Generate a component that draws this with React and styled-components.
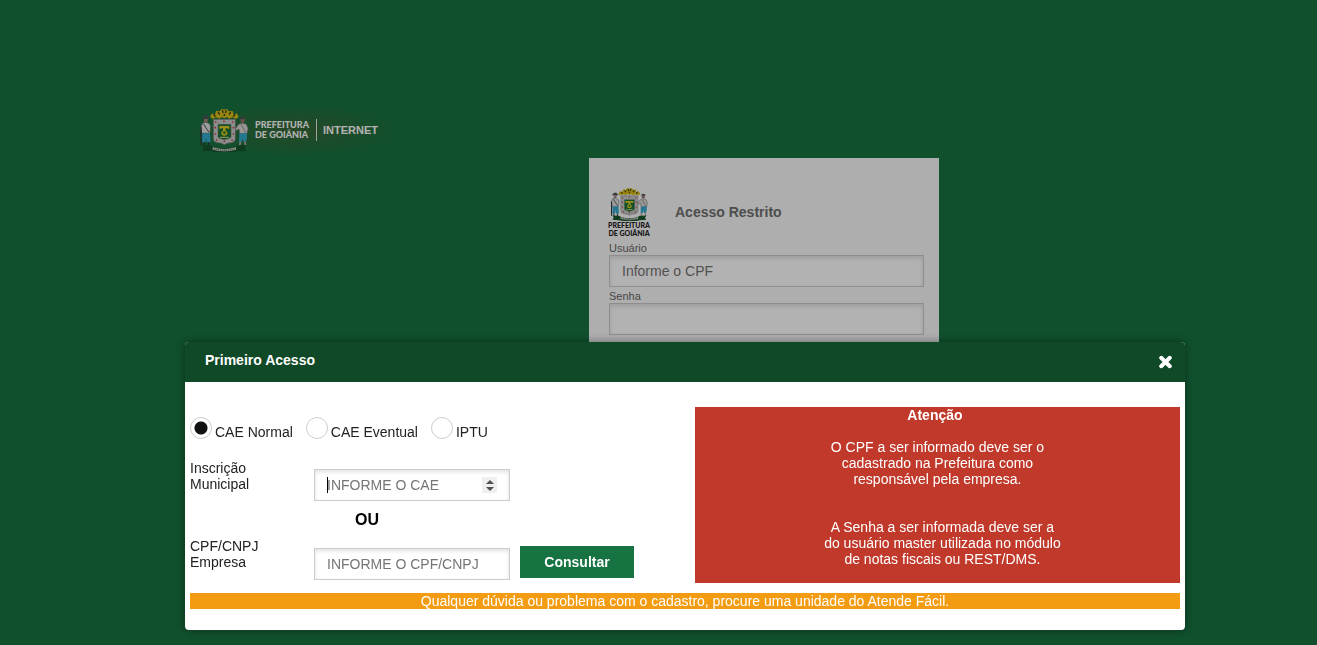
import React from "react";
import styled, { createGlobalStyle } from "styled-components";

const GlobalStyle = createGlobalStyle`
  *, *::before, *::after { box-sizing: border-box; }
  body {
    margin: 0;
    background: #177341;
    font-family: "Liberation Sans", Arial, sans-serif;
    font-size: 14px;
    line-height: 16px;
    color: #222;
  }
  p, h1, h2, fieldset { margin: 0; padding: 0; border: 0; }
  input, button { font: inherit; }
`;

const Page = styled.div`
  width: 100%;
  max-width: 947px;
  min-height: 100vh;
  margin: 0 auto;
  padding-top: 103px;
`;

const Brand = styled.header`
  display: flex;
  align-items: center;
  width: 220px;
  height: 55px;
  padding: 0 0 2px 14px;
  color: #fff;
  background: radial-gradient(closest-side, rgba(130, 80, 40, 0.3), transparent);
`;

const BrandName = styled.span`
  margin-left: 5px;
  padding: 1px 7px 1px 0;
  border-right: 1px solid #e4e4dc;
  font-family: Lato, sans-serif;
  font-weight: 900;
  font-size: 9px;
  line-height: 10px;
  white-space: nowrap;
`;

const BrandArea = styled.span`
  margin-left: 6px;
  font-weight: 700;
  font-size: 11px;
`;

const LoginColumn = styled.main`
  display: flex;
  justify-content: flex-end;
  padding-right: 193px;
`;

const LoginCard = styled.form`
  width: 350px;
  padding: 28px 15px 40px 20px;
  background: #f9f9f9;
  color: #666;
`;

const LoginHead = styled.div`
  display: flex;
  align-items: center;
  gap: 26px;
  height: 52px;
  margin-bottom: 4px;
`;

const Emblem = styled.div`
  display: flex;
  flex-direction: column;
  align-items: center;
  width: 40px;
  font-family: Lato, sans-serif;
  font-weight: 900;
  font-size: 7px;
  line-height: 8px;
  color: #222;
  white-space: nowrap;
  text-align: center;
`;

const LoginTitle = styled.h1`
  font-size: 14px;
  line-height: 16px;
  color: #707070;
`;

const LoginLabel = styled.label`
  display: block;
  height: 13px;
  font-size: 11px;
  line-height: 13px;
`;

const TextInput = styled.input`
  display: block;
  width: ${({ $width }) => $width || "100%"};
  height: 32px;
  padding: 0 12px;
  border: 1px solid #ccc;
  border-radius: 0;
  outline: none;
  background-color: #fff;
  box-shadow: inset 0 2px 4px rgba(0, 0, 0, 0.12);
  color: #333;
  &::placeholder { color: #757575; opacity: 1; }
`;

const LoginInput = styled(TextInput)`
  margin-bottom: 3px;
`;

const spinnerArrows =
  "url(\"data:image/svg+xml,%3Csvg xmlns='http://www.w3.org/2000/svg' width='15' height='16'%3E%3Cpath d='M4 7h8L8 3zM4 10h8l-4 4z' fill='%23505050'/%3E%3C/svg%3E\")";

const NumberInput = styled(TextInput)`
  background-image: linear-gradient(#000, #000);
  background-repeat: no-repeat;
  background-size: 1px 16px;
  background-position: 12px 7px;
  &::-webkit-inner-spin-button {
    appearance: none;
    width: 15px;
    height: 16px;
    opacity: 1;
    background: #efefef ${spinnerArrows} no-repeat center;
  }
`;

const Backdrop = styled.div`
  position: fixed;
  inset: 0;
  display: flex;
  justify-content: center;
  align-items: flex-end;
  padding: 0 0 15px 53px;
  background: rgba(0, 0, 0, 0.3);
`;

const Dialog = styled.section`
  width: 100%;
  max-width: 1000px;
  border-radius: 4px;
  background: #fff;
  box-shadow: 0 0 10px rgba(0, 0, 0, 0.4);
`;

const DialogHeader = styled.div`
  display: flex;
  align-items: center;
  justify-content: space-between;
  height: 40px;
  padding: 0 12px 4px 20px;
  border-radius: 4px 4px 0 0;
  background: #104928;
  color: #fff;
`;

const DialogTitle = styled.h2`
  font-size: 14px;
  line-height: 16px;
`;

const CloseButton = styled.button`
  display: flex;
  margin-top: 4px;
  padding: 0;
  border: 0;
  background: none;
  color: #fff;
  cursor: pointer;
`;

const DialogBody = styled.div`
  padding: 25px 5px 21px;
`;

const Columns = styled.div`
  display: flex;
  justify-content: space-between;
  gap: 20px;
`;

const Query = styled.form`
  flex: 1;
  padding-top: 10px;
`;

const RadioGroup = styled.fieldset`
  display: flex;
  gap: 13px;
  height: 23px;
  margin-bottom: 20px;
`;

const RadioLabel = styled.label`
  display: flex;
  align-items: flex-end;
  gap: 3px;
  white-space: nowrap;
`;

const Radio = styled.input`
  appearance: none;
  align-self: flex-start;
  width: 22px;
  height: 22px;
  margin: 0;
  border: 1px solid #ccc;
  border-radius: 50%;
  background: #fff;
  &:checked {
    background: radial-gradient(circle, #111 0 6px, #fff 7px);
  }
`;

const FieldRow = styled.div`
  display: flex;
  align-items: flex-start;
`;

const FieldLabel = styled.label`
  width: 124px;
`;

const FieldControl = styled.div`
  padding-top: ${({ $top }) => $top};
`;

const Or = styled.p`
  width: 196px;
  margin: 11px 0 10px 165px;
  font-weight: 700;
  font-size: 16px;
  color: #000;
`;

const SubmitButton = styled.button`
  width: 114px;
  height: 32px;
  margin: 8px 0 0 10px;
  padding: 0;
  border: 0;
  background: #177341;
  color: #fff;
  font-weight: 700;
  cursor: pointer;
`;

const Warning = styled.aside`
  width: 49%;
  padding-bottom: 16px;
  background: #c0392b;
  color: #fff;
  text-align: center;
`;

const WarningTitle = styled.h2`
  padding-right: 5px;
  margin-bottom: 16px;
  font-size: 14px;
  line-height: 16px;
`;

const WarningText = styled.p`
  & + & {
    margin-top: 32px;
    padding-left: 10px;
  }
`;

const HelpBar = styled.p`
  margin-top: 10px;
  background: #f39c12;
  color: #fff;
  text-align: center;
`;

function Crest({ width, height }) {
  const dots = [[55, 48], [80, 46], [106, 48], [54, 65], [108, 65], [54, 84], [108, 84], [58, 102], [81, 106], [104, 102]];
  return (
    <svg width={width} height={height} viewBox="5 6 153 132" aria-hidden="true">
      <path d="M38 32l6-10 9 4 3-11 11 1 6-7 8 2 8-2 6 7 11-1 3 11 9-4 6 10-8 7-10-5-10 4-8-5-7 4-7-4-8 5-10-4-10 5z" fill="#d9bf18" />
      <path d="M49 24l5 8M62 18l5 8M75 13l3 8M87 13l-3 8M100 18l-5 8M113 24l-5 8M81 24v6" stroke="#3a3a12" strokeWidth="4" />
      <path d="M48 40h66v59q0 9-12 11-14 0-21 6-7-6-21-6-12-2-12-11z" fill="#c9cdca" stroke="#777" strokeWidth="2" />
      <path d="M62 55h39v39q-8 6-20 7-11-1-19-7z" fill="#187138" stroke="#687e6c" strokeWidth="2" />
      <path d="M66 60h30v8h-5l-3-2h-3v8q9 5 3 12-7 6-14 0-6-7 3-12v-8h-3l-3 2h-5z" fill="#e4cf22" />
      <circle cx="81" cy="80" r="4" fill="#187138" />
      <path d="M68 94h26" stroke="#e7dc85" strokeWidth="3" />
      {dots.map(([x, y]) => <circle key={`${x}-${y}`} cx={x} cy={y} r="2.6" fill="#cc343d" />)}
      <path d="M12 36l6-3 2-5h11l2 5 6 3-6 3H18z" fill="#4d5658" />
      <path d="M20 39h11v7l-5 5-6-4z" fill="#a98778" />
      <path d="M16 51l10-2 9 3 5 8-2 22H14l-4-18z" fill="#dededb" stroke="#626b6c" strokeWidth="2" />
      <path d="M18 53l17 26" stroke="#4d575c" strokeWidth="3" />
      <path d="M15 82h23l2 27H28l-2-14-1 14H14z" fill="#35a9ce" />
      <path d="M11 62v56M20 109v10M34 109v10" stroke="#30383b" strokeWidth="4" />
      <path d="M127 40q0-8 9-8t9 8z" fill="#4d5658" />
      <path d="M129 40h13v6l-6 6-6-5z" fill="#9a7568" />
      <path d="M124 55l10-4 13 4 5 12-3 16h-22l-2-14-9 5-2-5z" fill="#d8d7d2" stroke="#777" strokeWidth="2" />
      <path d="M131 54l15 27" stroke="#667174" strokeWidth="2" />
      <path d="M126 82h23v14l-3 11h-8l-2-10-3 12h-8z" fill="#35a9ce" />
      <path d="M129 108l-2 11M143 107l2 12" stroke="#c4aaa0" strokeWidth="5" />
      <path d="M14 117l26 1 10 6q31 8 62 0l10-6 26-1-6 9 6 8-27 2q-40 8-80 0l-27-2 6-8z" fill="#16552d" />
      <path d="M46 124q35 11 70 0v7q-35 9-70 0z" fill="#d2d6ce" />
      <path d="M50 129q31 7 62 0" fill="none" stroke="#49574c" strokeWidth="3" strokeDasharray="4 2" />
    </svg>
  );
}

function CloseIcon() {
  return (
    <svg width="15" height="14" viewBox="0 0 15 14" aria-hidden="true">
      <path d="M3.2 2.8l8.6 8.4M11.8 2.8l-8.6 8.4" stroke="currentColor" strokeWidth="4" strokeLinecap="round" />
    </svg>
  );
}

export default function App() {
  return (
    <>
      <GlobalStyle />
      <Page>
        <Brand>
          <Crest width={51} height={44} />
          <BrandName>PREFEITURA<br />DE GOIÂNIA</BrandName>
          <BrandArea>INTERNET</BrandArea>
        </Brand>
        <LoginColumn>
          <LoginCard>
            <LoginHead>
              <Emblem>
                <Crest width={39} height={34} />
                <span>PREFEITURA<br />DE GOIÂNIA</span>
              </Emblem>
              <LoginTitle>Acesso Restrito</LoginTitle>
            </LoginHead>
            <LoginLabel htmlFor="usuario">Usuário</LoginLabel>
            <LoginInput id="usuario" type="text" placeholder="Informe o CPF" />
            <LoginLabel htmlFor="senha">Senha</LoginLabel>
            <LoginInput id="senha" type="password" />
          </LoginCard>
        </LoginColumn>
      </Page>
      <Backdrop>
        <Dialog role="dialog" aria-modal="true" aria-labelledby="primeiro-acesso">
          <DialogHeader>
            <DialogTitle id="primeiro-acesso">Primeiro Acesso</DialogTitle>
            <CloseButton type="button" aria-label="Fechar"><CloseIcon /></CloseButton>
          </DialogHeader>
          <DialogBody>
            <Columns>
              <Query>
                <RadioGroup>
                  <RadioLabel><Radio type="radio" name="tipo" defaultChecked />CAE Normal</RadioLabel>
                  <RadioLabel><Radio type="radio" name="tipo" />CAE Eventual</RadioLabel>
                  <RadioLabel><Radio type="radio" name="tipo" />IPTU</RadioLabel>
                </RadioGroup>
                <FieldRow>
                  <FieldLabel htmlFor="cae">Inscrição<br />Municipal</FieldLabel>
                  <FieldControl $top="9px">
                    <NumberInput id="cae" type="number" placeholder="INFORME O CAE" $width="196px" />
                  </FieldControl>
                </FieldRow>
                <Or>OU</Or>
                <FieldRow>
                  <FieldLabel htmlFor="cpf">CPF/CNPJ<br />Empresa</FieldLabel>
                  <FieldControl $top="10px">
                    <TextInput id="cpf" type="text" placeholder="INFORME O CPF/CNPJ" $width="196px" />
                  </FieldControl>
                  <SubmitButton type="button">Consultar</SubmitButton>
                </FieldRow>
              </Query>
              <Warning>
                <WarningTitle>Atenção</WarningTitle>
                <WarningText>
                  O CPF a ser informado deve ser o<br />
                  cadastrado na Prefeitura como<br />
                  responsável pela empresa.
                </WarningText>
                <WarningText>
                  A Senha a ser informada deve ser a<br />
                  do usuário master utilizada no módulo<br />
                  de notas fiscais ou REST/DMS.
                </WarningText>
              </Warning>
            </Columns>
            <HelpBar>Qualquer dúvida ou problema com o cadastro, procure uma unidade do Atende Fácil.</HelpBar>
          </DialogBody>
        </Dialog>
      </Backdrop>
    </>
  );
}
